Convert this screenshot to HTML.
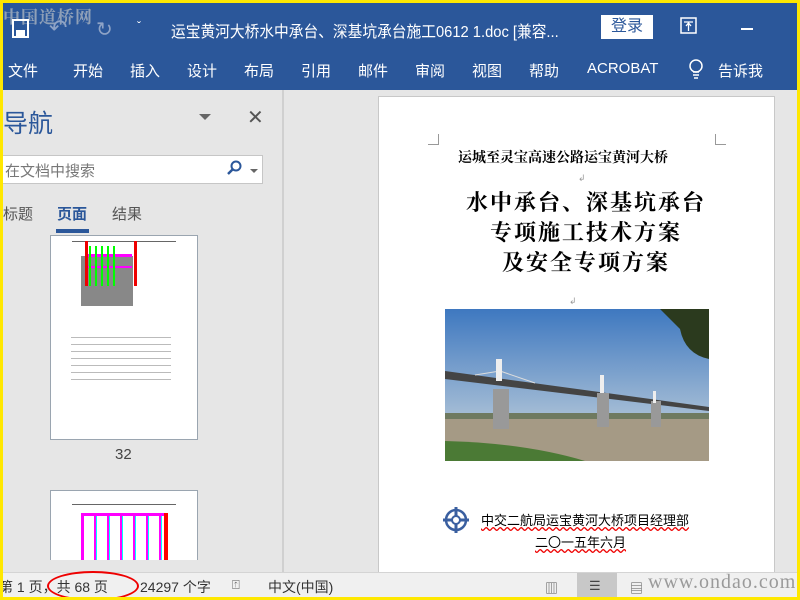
<!DOCTYPE html>
<html><head><meta charset="utf-8"><style>
*{margin:0;padding:0;box-sizing:border-box}
body{width:800px;height:600px;overflow:hidden;background:#ffe800;font-family:"Liberation Sans","Noto Sans CJK SC",sans-serif;position:relative}
.a{position:absolute}
.w{color:#fff;font-size:15px}
.ser{font-family:"Noto Serif CJK SC","Liberation Serif",serif;font-weight:bold;color:#000}
.pm{color:#999;font-size:9px}
</style></head><body>
<div class="a" style="left:3px;top:3px;width:794px;height:594px;background:#e6e6e6;overflow:hidden">
<!-- title bar -->
<div class="a" style="left:0;top:0;width:794px;height:87px;background:#2b579a"></div>
<div class="a" style="left:0;top:0;color:#8fa0b8;font-size:17px;font-weight:bold;letter-spacing:1px;font-family:'Noto Serif CJK SC',serif">中国道桥网</div>
<svg class="a" style="left:9px;top:16px" width="18" height="20"><rect x="1" y="1" width="15" height="17" fill="none" stroke="#fff" stroke-width="2"/><rect x="4" y="11" width="9" height="7" fill="#fff"/></svg>
<div class="a" style="left:46px;top:12px;color:#8ea3c6;font-size:22px">↶</div>
<div class="a" style="left:93px;top:14px;color:#8ea3c6;font-size:20px">↻</div>
<div class="a" style="left:134px;top:16px;color:#fff;font-size:12px">ˇ</div>
<div class="a w" style="left:168px;top:15px;font-size:16px;white-space:nowrap;transform:scaleX(0.92);transform-origin:0 0">运宝黄河大桥水中承台、深基坑承台施工0612 1.doc [兼容...</div>
<div class="a" style="left:598px;top:12px;width:52px;height:24px;background:#fff;color:#2b579a;font-size:16px;text-align:center;line-height:24px">登录</div>
<svg class="a" style="left:677px;top:14px" width="18" height="18"><rect x="1" y="1" width="15" height="15" fill="none" stroke="#fff" stroke-width="1.5"/><path d="M4 5h9M8.5 6v8M6 9l2.5-3 2.5 3" stroke="#fff" fill="none" stroke-width="1.3"/></svg>
<div class="a" style="left:738px;top:25px;width:12px;height:2px;background:#fff"></div>
<!-- tabs -->
<div class="a w" style="left:5px;top:57px">文件</div>
<div class="a w" style="left:70px;top:57px">开始</div>
<div class="a w" style="left:127px;top:57px">插入</div>
<div class="a w" style="left:184px;top:57px">设计</div>
<div class="a w" style="left:241px;top:57px">布局</div>
<div class="a w" style="left:298px;top:57px">引用</div>
<div class="a w" style="left:355px;top:57px">邮件</div>
<div class="a w" style="left:412px;top:57px">审阅</div>
<div class="a w" style="left:469px;top:57px">视图</div>
<div class="a w" style="left:526px;top:57px">帮助</div>
<div class="a w" style="left:584px;top:57px">ACROBAT</div>
<svg class="a" style="left:685px;top:55px" width="16" height="24"><circle cx="8" cy="8" r="6" fill="none" stroke="#fff" stroke-width="1.5"/><path d="M5 14h6M5 17h6M6 20h4" stroke="#fff" stroke-width="1.5"/></svg>
<div class="a w" style="left:715px;top:57px">告诉我</div>
<!-- nav pane -->
<div class="a" style="left:279px;top:87px;width:2px;height:482px;background:#d0d0d0"></div>
<div class="a" style="left:0;top:101px;font-size:25px;color:#2b579a">导航</div>
<div class="a" style="left:196px;top:111px;border-left:6px solid transparent;border-right:6px solid transparent;border-top:6px solid #666"></div>
<div class="a" style="left:244px;top:102px;font-size:20px;color:#555">✕</div>
<div class="a" style="left:0;top:152px;width:260px;height:29px;background:#fff;border:1px solid #c6c6c6;border-left:none"></div>
<div class="a" style="left:2px;top:157px;font-size:15px;color:#777">在文档中搜索</div>
<svg class="a" style="left:224px;top:157px" width="16" height="16"><circle cx="9" cy="6" r="4.5" fill="none" stroke="#2b579a" stroke-width="2"/><path d="M6 9l-5 5" stroke="#2b579a" stroke-width="2.5"/></svg>
<div class="a" style="left:247px;top:166px;border-left:4px solid transparent;border-right:4px solid transparent;border-top:4px solid #666"></div>
<div class="a" style="left:0;top:200px;font-size:15px;color:#555">标题</div>
<div class="a" style="left:54px;top:200px;font-size:15px;color:#2b579a;font-weight:bold">页面</div>
<div class="a" style="left:53px;top:226px;width:33px;height:4px;background:#2b579a"></div>
<div class="a" style="left:109px;top:200px;font-size:15px;color:#555">结果</div>
<!-- thumb1 -->
<div class="a" style="left:47px;top:232px;width:148px;height:205px;background:#fff;border:1px solid #9aa5b0">
<div class="a" style="left:21px;top:5px;width:104px;height:1px;background:#666"></div>
<div class="a" style="left:30px;top:20px;width:52px;height:50px;background:#888"></div>
<div class="a" style="left:35px;top:18px;width:46px;height:3px;background:#f0f"></div>
<div class="a" style="left:35px;top:30px;width:46px;height:2px;background:#f0f"></div>
<div class="a" style="left:34px;top:5px;width:3px;height:45px;background:#e00"></div>
<div class="a" style="left:83px;top:5px;width:3px;height:45px;background:#e00"></div>
<div class="a" style="left:38px;top:10px;width:30px;height:40px;background:repeating-linear-gradient(90deg,#0f0 0 2px,transparent 2px 6px)"></div>
<div class="a" style="left:20px;top:95px;width:100px;height:50px;background:repeating-linear-gradient(#fff 0 6px,#bbb 6px 7px)"></div>
</div>
<div class="a" style="left:112px;top:443px;font-size:15px;color:#444">32</div>
<div class="a" style="left:47px;top:487px;width:148px;height:70px;background:#fff;border:1px solid #9aa5b0;border-bottom:none;overflow:hidden">
<div class="a" style="left:21px;top:13px;width:104px;height:1px;background:#666"></div>
<div class="a" style="left:30px;top:22px;width:86px;height:50px;border:3px solid #f0f;background:repeating-linear-gradient(90deg,#fff 0 10px,#f0f 10px 12px,#0ff 12px 13px);"></div>
<div class="a" style="left:113px;top:22px;width:4px;height:50px;background:#f00"></div>
</div>
<!-- document page -->
<div class="a" style="left:375px;top:93px;width:397px;height:480px;background:#fff;border:1px solid #c8c8c8"></div>
<div class="a" style="left:425px;top:131px;width:11px;height:11px;border-right:1px solid #999;border-bottom:1px solid #999"></div>
<div class="a" style="left:712px;top:131px;width:11px;height:11px;border-left:1px solid #999;border-bottom:1px solid #999"></div>
<div class="a ser" style="left:455px;top:144px;font-size:14px">运城至灵宝高速公路运宝黄河大桥</div>
<div class="a ser" style="left:463px;top:183px;font-size:22px;letter-spacing:2px">水中承台、深基坑承台</div>
<div class="a ser" style="left:487px;top:213px;font-size:22px;letter-spacing:2px">专项施工技术方案</div>
<div class="a ser" style="left:499px;top:243px;font-size:22px;letter-spacing:2px">及安全专项方案</div>
<div class="a pm" style="left:575px;top:170px">↲</div>
<div class="a pm" style="left:566px;top:293px">↲</div>
<!-- photo -->
<svg class="a" style="left:442px;top:306px" width="264" height="152">
<defs><linearGradient id="s" x1="0" y1="0" x2="0" y2="1"><stop offset="0" stop-color="#3e78c0"/><stop offset="1" stop-color="#a8bfd6"/></linearGradient></defs>
<rect width="264" height="110" fill="url(#s)"/>
<rect y="108" width="264" height="44" fill="#a59a85"/>
<rect y="104" width="264" height="6" fill="#6f7a60"/>
<path d="M0 132 Q80 134 140 152 L0 152Z" fill="#4b7a35"/>
<path d="M0 62 L264 98 L264 102 L0 70Z" fill="#444"/>
<path d="M55 62 L30 66 M55 62 L90 74" stroke="#ddd" stroke-width="1"/>
<rect x="48" y="80" width="16" height="40" fill="#999"/>
<rect x="51" y="50" width="6" height="22" fill="#eee"/>
<rect x="152" y="84" width="12" height="34" fill="#999"/>
<rect x="155" y="66" width="4" height="18" fill="#eee"/>
<rect x="206" y="92" width="10" height="26" fill="#999"/>
<rect x="208" y="82" width="3" height="12" fill="#eee"/>
<path d="M215 0 L264 0 L264 50 Q240 45 235 20Z" fill="#2b3a1e"/>
</svg>
<!-- logo -->
<svg class="a" style="left:440px;top:503px" width="26" height="28"><circle cx="13" cy="14" r="10" fill="none" stroke="#3a5fa0" stroke-width="2.5"/><path d="M13 1v26M0 14h26" stroke="#3a5fa0" stroke-width="3"/><circle cx="13" cy="14" r="4" fill="#fff" stroke="#3a5fa0" stroke-width="2"/></svg>
<div class="a" style="left:478px;top:507px;font-size:13px;color:#000;text-decoration:underline wavy #e00">中交二航局运宝黄河大桥项目经理部</div>
<div class="a" style="left:532px;top:529px;font-size:13px;color:#000;text-decoration:underline wavy #e00">二〇一五年六月</div>
<!-- status bar -->
<div class="a" style="left:0;top:569px;width:794px;height:25px;background:#f0f0f0;border-top:1px solid #d4d4d4"></div>
<div class="a" style="left:-4px;top:574px;font-size:14px;color:#333">第 1 页，共 68 页</div>
<div class="a" style="left:137px;top:574px;font-size:14px;color:#333">24297 个字</div>
<div class="a" style="left:44px;top:568px;width:92px;height:30px;border:2px solid #e00;border-radius:50%"></div>
<div class="a" style="left:229px;top:574px;font-size:13px;color:#555">⍐</div>
<div class="a" style="left:265px;top:574px;font-size:14px;color:#333">中文(中国)</div>
<div class="a" style="left:542px;top:575px;font-size:13px;color:#555">▥</div>
<div class="a" style="left:574px;top:570px;width:40px;height:24px;background:#c8c8c8"></div>
<div class="a" style="left:586px;top:575px;font-size:13px;color:#444">☰</div>
<div class="a" style="left:627px;top:575px;font-size:13px;color:#555">▤</div>
<div class="a" style="left:645px;top:568px;font-size:20px;color:#9a9a9a;font-family:'Liberation Serif',serif;letter-spacing:1px">www.ondao.com</div>
</div>
</body></html>
